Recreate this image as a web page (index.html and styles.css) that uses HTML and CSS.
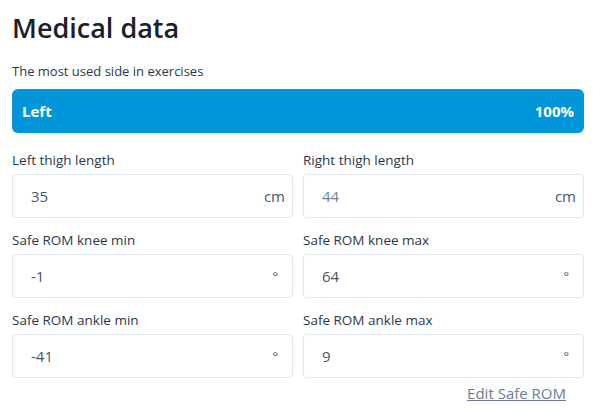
FILE: index.html
```html
<!DOCTYPE html>
<html>
<head>
<meta charset="utf-8">
<link rel="stylesheet" href="styles.css">
</head>
<body>
<div class="page">
  <h1 class="title">Medical data</h1>
  <p class="subtitle">The most used side in exercises</p>
  <div class="side-bar">
    <span>Left</span>
    <span>100%</span>
  </div>
  <div class="grid">
    <div class="field">
      <label class="label">Left thigh length</label>
      <div class="input"><span class="value">35</span><span class="unit">cm</span></div>
    </div>
    <div class="field">
      <label class="label">Right thigh length</label>
      <div class="input"><span class="value muted">44</span><span class="unit">cm</span></div>
    </div>
    <div class="field">
      <label class="label">Safe ROM knee min</label>
      <div class="input"><span class="value">-1</span><span class="unit deg">°</span></div>
    </div>
    <div class="field">
      <label class="label">Safe ROM knee max</label>
      <div class="input"><span class="value">64</span><span class="unit deg">°</span></div>
    </div>
    <div class="field">
      <label class="label">Safe ROM ankle min</label>
      <div class="input"><span class="value">-41</span><span class="unit deg">°</span></div>
    </div>
    <div class="field">
      <label class="label">Safe ROM ankle max</label>
      <div class="input"><span class="value">9</span><span class="unit deg">°</span></div>
    </div>
  </div>
  <div class="actions"><a class="edit-link" href="#">Edit Safe ROM</a></div>
</div>
</body>
</html>
```
FILE: styles.css
```css
* { box-sizing: border-box; }
html, body { margin: 0; padding: 0; background: #fff; }
body { font-family: "Open Sans", "Noto Sans", sans-serif; color: #1f2937; }
.page { padding: 10px 17px 0 12px; }
.title {
  margin: 0;
  font-size: 27px;
  font-weight: 600;
  line-height: 36px;
  color: #1a202c;
}
.subtitle {
  margin: 16px 0 0;
  font-size: 13px;
  line-height: 18px;
  color: #2d3748;
}
.side-bar {
  margin-top: 9px;
  height: 44px;
  background: #0096d9;
  border-radius: 6px;
  display: flex;
  justify-content: space-between;
  align-items: center;
  padding: 0 10px;
  color: #fff;
  font-weight: 700;
  font-size: 15px;
}
.grid {
  margin-top: 17px;
  display: grid;
  grid-template-columns: 1fr 1fr;
  column-gap: 10px;
  row-gap: 12px;
}
.field { display: flex; flex-direction: column; }
.label {
  font-size: 13.5px;
  line-height: 20px;
  color: #2d3748;
  margin-bottom: 4px;
}
.input {
  height: 44px;
  border: 1px solid #e2e8f0;
  border-radius: 4px;
  display: flex;
  align-items: center;
  justify-content: space-between;
  padding: 0 7px 0 18px;
}
.value { font-size: 15px; color: #4a5568; }
.value.muted { color: #718096; }
.unit { font-size: 15px; color: #4a5568; }
.unit.deg { font-size: 13px; padding-right: 7px; }
.actions {
  display: flex;
  justify-content: flex-end;
  padding-right: 18px;
  margin-top: 5px;
}
.edit-link {
  font-size: 15px;
  color: #6e7c96;
  text-decoration: underline;
}
```
